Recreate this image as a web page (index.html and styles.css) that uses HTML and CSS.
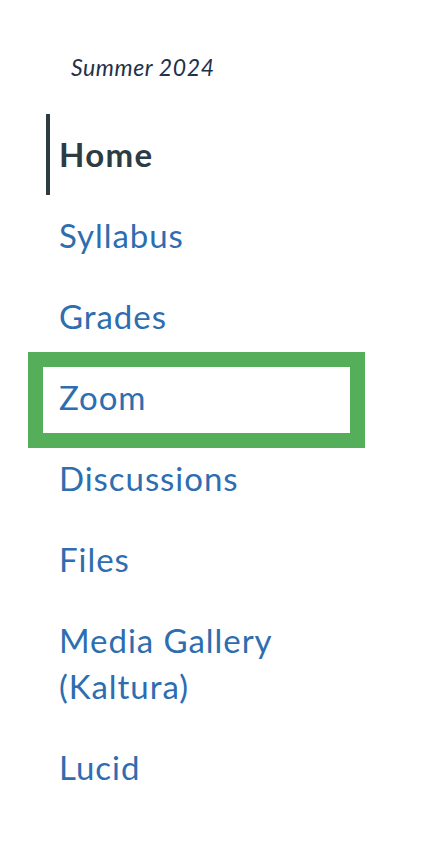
FILE: index.html
```html
<!DOCTYPE html>
<html lang="en">
<head>
<meta charset="utf-8">
<title>Course navigation</title>
<link rel="stylesheet" href="styles.css">
</head>
<body>
<div class="sidebar">
  <div class="term">Summer 2024</div>
  <ul class="nav">
    <li class="nav-item active"><a href="#">Home</a></li>
    <li class="nav-item"><a href="#">Syllabus</a></li>
    <li class="nav-item"><a href="#">Grades</a></li>
    <li class="nav-item highlighted"><a href="#">Zoom</a><span class="highlight-box"></span></li>
    <li class="nav-item"><a href="#">Discussions</a></li>
    <li class="nav-item"><a href="#">Files</a></li>
    <li class="nav-item"><a href="#">Media Gallery<br>(Kaltura)</a></li>
    <li class="nav-item"><a href="#">Lucid</a></li>
  </ul>
</div>
</body>
</html>
```

FILE: styles.css
```css
html, body {
  margin: 0;
  padding: 0;
  background: #ffffff;
}

body {
  font-family: Lato, "Noto Sans", sans-serif;
}

.sidebar {
  padding: 53px 0 0 46px;
}

.term {
  font-style: italic;
  font-size: 23px;
  line-height: 28px;
  letter-spacing: 0.6px;
  color: #23304a;
  padding-left: 25px;
  margin-bottom: 33px;
}

.nav {
  list-style: none;
  margin: 0;
  padding: 0;
}

.nav-item {
  position: relative;
  border-left: 4px solid transparent;
  padding: 17px 0 18px 9px;
  font-size: 33px;
  line-height: 46px;
  letter-spacing: 0.95px;
}

.nav-item a {
  color: #2d6db0;
  text-decoration: none;
}

.nav-item.active {
  border-left-color: #2d3b45;
}

.nav-item.active a {
  color: #2d3b45;
  font-weight: 700;
  letter-spacing: 1.3px;
}

.highlight-box {
  position: absolute;
  left: -22px;
  top: -5px;
  width: 307px;
  height: 66px;
  border: 15px solid #55ae5a;
  pointer-events: none;
}
```
